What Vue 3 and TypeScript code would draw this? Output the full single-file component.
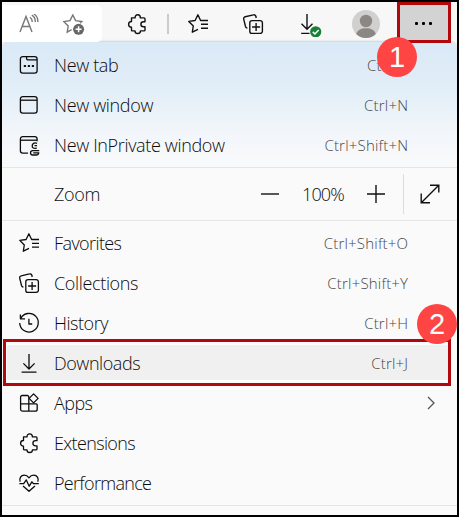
<script setup lang="ts">
import { h, type FunctionalComponent } from 'vue'

type IconName =
  | 'tab' | 'window' | 'private' | 'favorites' | 'collections' | 'history'
  | 'download' | 'apps' | 'puzzle' | 'performance'

interface MenuItem {
  id: string
  label: string
  icon: IconName
  shortcut?: string
  submenu?: boolean
}

const icons: Record<IconName, string[]> = {
  tab: [
    'M3.8 1.6H15.7A2.4 2.4 0 0 1 18.1 4V15.8A2.4 2.4 0 0 1 15.7 18.2H3.8A2.4 2.4 0 0 1 1.4 15.8V4A2.4 2.4 0 0 1 3.8 1.6Z',
    'M7.6 1.8V3.4A1.5 1.5 0 0 0 9.1 4.9H18',
    'M5.4 10.6H6.4V11.4H5.4ZM9.4 10.6H10.4V11.4H9.4ZM13.4 10.6H14.4V11.4H13.4Z',
  ],
  window: [
    'M3.8 1.6H15.7A2.4 2.4 0 0 1 18.1 4V15.8A2.4 2.4 0 0 1 15.7 18.2H3.8A2.4 2.4 0 0 1 1.4 15.8V4A2.4 2.4 0 0 1 3.8 1.6Z',
    'M1.5 5.2H18',
  ],
  private: [
    'M9 18.2H3.8A2.4 2.4 0 0 1 1.4 15.8V4A2.4 2.4 0 0 1 3.8 1.6H15.7A2.4 2.4 0 0 1 18.1 4V6.2',
    'M1.5 5.2H18',
    'M18 8.4C15.2 7.1 13 8.8 13.2 11.2C13.3 13 14.6 13.6 17.8 13.2M15.5 10.6H18',
    'M20.2 15.6H13.7C10.8 15.6 10.8 20 13.7 20H17.5C18.8 20 19.6 19.2 19.8 17.9H14.2',
  ],
  favorites: [
    'M10 15.3L4.3 18.2L5.3 12L.8 7.4L7.1 6.5L9.9 .8L12.6 6.5H20M13 10.3H20M13 14.2H20',
  ],
  collections: [
    'M9 6.6H17.2A2.2 2.2 0 0 1 19.4 8.8V17.2A2.2 2.2 0 0 1 17.2 19.4H9A2.2 2.2 0 0 1 6.8 17.2V8.8A2.2 2.2 0 0 1 9 6.6Z',
    'M13.2 4L12.9 2.5A2 2 0 0 0 10.4 .9L2.2 2.8A2 2 0 0 0 .7 5.2L2.5 12.5A2.2 2.2 0 0 0 4.4 14.1',
    'M13.1 9V17M9.1 13H17.1',
  ],
  history: [
    'M1.4 1.4V5.8H6M1.7 5.5A9.3 9.3 0 1 1 .7 10',
    'M9.9 5.7V11H13.2',
  ],
  download: ['M10 1V15.6M4.4 10.4L10 16L15.6 10.4M2.6 19.2H17.5'],
  apps: [
    'M9.8 4V18.2M1.6 10.8H17.2A1 1 0 0 1 18.2 11.8V16.2A2 2 0 0 1 16.2 18.2H3.6A2 2 0 0 1 1.6 16.2V4A1.5 1.5 0 0 1 3.1 2.5H8.3A1.5 1.5 0 0 1 9.8 4V10.8',
    'M14.6 .9L19.1 5.4L14.6 9.9L10.1 5.4Z',
  ],
  puzzle: [
    'M4.5 3.9H8C8 2 9 .8 10.7 .8S13.4 2 13.4 3.9H17C17.7 3.9 18 4.3 18 4.9V7.7H16.5C15 7.7 13.9 8.8 13.9 10.3S15 12.8 16.5 12.8H18V15.9C18 16.6 17.7 16.9 17 16.9H13.4C13.4 18.6 12.4 19.5 10.7 19.5S8 18.6 8 16.9H5.5C4.8 16.9 4.5 16.6 4.5 15.9V13.2C2.7 13.2 1.6 12 1.6 10.3S2.7 7.5 4.5 7.5Z',
  ],
  performance: [
    'M1.2 8.8C-.1 5.5 2 2.1 5.3 2.1C7.3 2.1 8.9 3.2 10 4.8C11.1 3.2 12.7 2.1 14.7 2.1C18 2.1 20.1 5.5 18.8 8.8M4 12.9L10 18.3L16 12.9',
    'M.4 10.7H4.7L7.3 6.9L10.2 13.2L12.9 8.8L14.4 10.7H19.8',
  ],
}

const LineIcon: FunctionalComponent<{ name: IconName }> = (props) =>
  h(
    'svg',
    {
      width: 20, height: 20, viewBox: '0 0 20 20', overflow: 'visible', fill: 'none',
      stroke: 'currentColor', 'stroke-width': 1.3, 'stroke-linejoin': 'round', 'aria-hidden': 'true',
    },
    icons[props.name].map((d) => h('path', { d })),
  )
LineIcon.props = ['name']

const windowItems: MenuItem[] = [
  { id: 'tab', label: 'New tab', icon: 'tab', shortcut: 'Ctrl+T' },
  { id: 'window', label: 'New window', icon: 'window', shortcut: 'Ctrl+N' },
  { id: 'private', label: 'New InPrivate window', icon: 'private', shortcut: 'Ctrl+Shift+N' },
]

const toolItems: MenuItem[] = [
  { id: 'favorites', label: 'Favorites', icon: 'favorites', shortcut: 'Ctrl+Shift+O' },
  { id: 'collections', label: 'Collections', icon: 'collections', shortcut: 'Ctrl+Shift+Y' },
  { id: 'history', label: 'History', icon: 'history', shortcut: 'Ctrl+H' },
  { id: 'downloads', label: 'Downloads', icon: 'download', shortcut: 'Ctrl+J' },
  { id: 'apps', label: 'Apps', icon: 'apps', submenu: true },
  { id: 'extensions', label: 'Extensions', icon: 'puzzle' },
  { id: 'performance', label: 'Performance', icon: 'performance' },
]
</script>

<template>
  <main class="frame">
    <header class="toolbar">
      <div class="address">
        <svg class="read" width="20" height="20" viewBox="0 0 20 20">
          <path d="M1 18L7 2.5L13 18M3 12.5H11M11 3.2C12.5 4.3 13.3 6 13.3 8M12.8 1.2C15.4 2.8 16.4 5.2 16.2 8M15 0C18 2 19 5 18.8 8" />
        </svg>
        <svg class="add" width="22" height="22" viewBox="0 0 22 22">
          <path d="M8.6 15.6L4.2 18.1L5.2 12L.8 7.5L7 6.6L9.8 1L12.6 6.6L18.8 7.5L17 9.3" />
          <circle cx="15.6" cy="15.3" r="5.5" />
          <path class="plus" d="M15.6 12.3V18.3M12.6 15.3H18.6" />
        </svg>
      </div>
      <LineIcon class="tool puzzle" name="puzzle" />
      <span class="split"></span>
      <LineIcon class="tool star" name="favorites" />
      <LineIcon class="tool stack" name="collections" />
      <svg class="done" width="22" height="24" viewBox="0 0 22 24">
        <path d="M7 1V16M1.5 10.8L7 16.3L12.5 10.8M1.2 20.4H9.5" />
        <circle cx="15.7" cy="18.8" r="5.6" />
        <path class="check" d="M12.8 18.9L14.9 21L18.7 17" />
      </svg>
      <svg class="avatar" width="28" height="28" viewBox="0 0 28 28">
        <circle cx="14" cy="14" r="14" fill="#d2d0ce" />
        <circle cx="14" cy="11" r="6.2" fill="#8a8785" />
        <path d="M4.2 24C5.3 20.3 9 18.3 14 18.3S22.7 20.3 23.8 24A14 14 0 0 1 4.2 24Z" fill="#8a8785" />
      </svg>
      <div class="more">
        <i></i><i></i><i></i>
        <span class="badge one">1</span>
      </div>
    </header>

    <section class="menu">
      <div class="group first">
        <div v-for="item in windowItems" :key="item.id" class="row">
          <LineIcon :name="item.icon" />
          <span class="label" :class="item.id">{{ item.label }}</span>
          <kbd>{{ item.shortcut }}</kbd>
        </div>
      </div>

      <div class="zoom">
        <span class="label">Zoom</span>
        <svg width="18" height="18" viewBox="0 0 18 18"><path d="M0 9H18" /></svg>
        <span class="percent">100%</span>
        <svg width="18" height="18" viewBox="0 0 18 18"><path d="M0 9H18M9 0V18" /></svg>
        <span class="rule"></span>
        <svg width="20" height="20" viewBox="0 0 20 20"><path d="M1.5 18.5L18.5 1.5M10 1.2H18.8V8.5M1.2 9.5V18.8H10" /></svg>
      </div>

      <div class="group">
        <div v-for="item in toolItems" :key="item.id" class="row" :class="{ marked: item.id === 'downloads' }">
          <LineIcon :name="item.icon" />
          <span class="label" :class="item.id">{{ item.label }}</span>
          <kbd v-if="item.shortcut">{{ item.shortcut }}</kbd>
          <svg v-if="item.submenu" class="chevron" width="8" height="14" viewBox="0 0 8 14"><path d="M1 1L7 7L1 13" /></svg>
          <span v-if="item.id === 'downloads'" class="outline"></span>
          <span v-if="item.id === 'history'" class="badge two">2</span>
        </div>
      </div>
    </section>
  </main>
</template>

<style>
body { margin: 0; }
</style>

<style scoped>
* { box-sizing: border-box; }
.frame {
  width: 459px;
  height: 517px;
  border: 2px solid #000;
  overflow: hidden;
  background: #f7f7f7;
  color: #0c0c0c;
  font-family: "Open Sans", "Noto Sans", sans-serif;
  font-weight: 330;
}
.toolbar {
  display: flex;
  height: 40px;
  padding-top: 3px;
  align-items: flex-start;
}
.toolbar > * { flex: none; }
.toolbar svg { fill: none; stroke: #111; stroke-width: 1.4; }
.address {
  display: flex;
  width: 100px;
  height: 37px;
  padding: 9px 0 0 17px;
  gap: 24px;
  background: #fff;
  border-radius: 0 5px 5px 0;
}
.toolbar .address svg { stroke: #777; }
.address circle { fill: #666; stroke: none; }
.address .plus { stroke: #fff; stroke-width: 1.5; }
.tool { margin-top: 9px; color: #111; }
.puzzle { margin-left: 25px; }
.split { width: 2px; height: 20px; margin: 9px 0 0 20px; background: #ccc; }
.star { margin-left: 19px; }
.stack { margin-left: 35px; }
.done { margin: 8px 0 0 37px; }
.toolbar .done circle { fill: #178038; stroke: none; }
.toolbar .done .check { stroke: #fff; stroke-width: 1.5; }
.toolbar .avatar { margin: 5px 0 0 30px; stroke: none; }
.more {
  position: relative;
  display: flex;
  width: 54px;
  height: 41px;
  margin: -3px 0 0 17px;
  border: 3px solid #b2080d;
  background: #d3d3d3;
  align-items: center;
  justify-content: center;
  gap: 4px;
  padding-top: 2px;
  padding-right: 2px;
  z-index: 2;
}
.more i { width: 3px; height: 3px; border-radius: 1px; background: #000; }
.badge {
  position: absolute;
  width: 40px;
  height: 40px;
  border-radius: 50%;
  background: #ff4444;
  color: #fff;
  font: 29px/40px "Liberation Sans", Arial, sans-serif;
  text-align: center;
  z-index: 3;
}
.one { left: -23px; top: 32px; }
.two { left: 415px; top: 1px; }
.menu {
  height: 473px;
  border-radius: 8px 8px 0 0;
  background: linear-gradient(#d9e9f6 0, #e2eef8 48px, #f2f6fa 90px, #fafafa 130px);
  box-shadow: 0 -1px 2px #00000026;
}
.group { padding-top: 2px; }
.first { height: 126px; padding-top: 3px; border-bottom: 1px solid #e5e5e5; }
.row {
  position: relative;
  display: flex;
  height: 40px;
  padding: 0 49px 0 17px;
  align-items: center;
}
.label {
  margin: -1px 0 0 15px;
  font-size: 18px;
  line-height: 24px;
  letter-spacing: -.35px;
  white-space: nowrap;
}
.label.window { letter-spacing: -.35px; }
.label.favorites { letter-spacing: -.6px; }
.label.collections { letter-spacing: -.35px; }
.label.history { letter-spacing: -.45px; }
.label.downloads { letter-spacing: -.45px; }
.label.apps { letter-spacing: -.55px; }
.label.extensions { letter-spacing: -.65px; }
.label.performance { letter-spacing: -.7px; }
kbd {
  margin: 0 -.25px 0 auto;
  font: 330 15px/20px "Open Sans", "Noto Sans", sans-serif;
  letter-spacing: .2px;
  color: #484848;
}
.zoom {
  display: flex;
  height: 53px;
  padding-left: 37px;
  align-items: center;
  border-bottom: 1px solid #e5e5e5;
}
.zoom .label { width: 207px; flex: none; }
.zoom svg { flex: none; fill: none; stroke: #111; stroke-width: 1.4; }
.percent {
  width: 88px;
  flex: none;
  text-align: center;
  font-size: 18px;
  line-height: 24px;
  letter-spacing: -.8px;
  margin-top: -1px;
}
.rule { width: 1px; height: 40px; margin: 0 16px 0 18px; background: #ddd; flex: none; }
.group:last-child { height: 285px; border-bottom: 1px solid #e5e5e5; }
.marked::before {
  content: "";
  position: absolute;
  inset: 2px 9px 3px 5px;
  background: #f0f0f0;
  box-shadow: 0 0 0 1px #fff;
}
.marked > * { position: relative; }
.marked > .outline {
  position: absolute;
  inset: -4px 6px -3px 1px;
  border: 3px solid #b2080d;
}
.chevron { margin: 0 -27px 0 auto; fill: none; stroke: #555; stroke-width: 1.3; }
</style>
